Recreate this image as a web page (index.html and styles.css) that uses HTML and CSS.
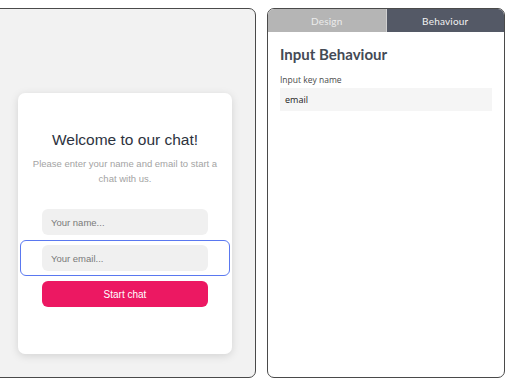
FILE: index.html
```html
<!DOCTYPE html>
<html lang="en">
<head>
    <meta charset="UTF-8">
    <meta name="viewport" content="width=device-width, initial-scale=1.0">
    <title>Chat Form Editor</title>
    <link rel="stylesheet" href="styles.css">
</head>
<body>
    <div class="preview">
        <div class="card">
            <h1>Welcome to our chat!</h1>
            <p class="intro">Please enter your name and email to start a chat with us.</p>
            <div class="form">
                <div class="field">
                    <input type="text" class="input" placeholder="Your name...">
                </div>
                <div class="field selected">
                    <input type="email" class="input" placeholder="Your email...">
                </div>
                <div class="field">
                    <button class="start">Start chat</button>
                </div>
            </div>
        </div>
    </div>

    <div class="settings">
        <div class="tabs">
            <div class="tab">Design</div>
            <div class="tab active">Behaviour</div>
        </div>
        <div class="settings-body">
            <h2>Input Behaviour</h2>
            <label class="label">Input key name</label>
            <div class="value">email</div>
        </div>
    </div>
</body>
</html>
```

FILE: styles.css
```css
* {
    margin: 0;
    padding: 0;
    box-sizing: border-box;
}

body {
    background: #fff;
    height: 382px;
    overflow: hidden;
    display: flex;
    gap: 11px;
    padding: 8px 5px 4px 0;
}

.preview {
    margin-left: -10px;
    width: 266px;
    height: 370px;
    background: #f2f2f2;
    border: 1px solid #4a4a4a;
    border-radius: 7px;
    padding: 84px 0 0 27px;
}

.card {
    width: 214px;
    height: 261px;
    background: #fff;
    border-radius: 7px;
    box-shadow: 0 2px 8px rgba(0, 0, 0, 0.13);
    padding: 37px 2px 0;
    text-align: center;
    font-family: "Liberation Sans", Arial, sans-serif;
}

.card h1 {
    font-size: 15.5px;
    font-weight: 400;
    line-height: 20px;
    color: #2d3340;
}

.intro {
    max-width: 192px;
    font-size: 9.5px;
    line-height: 15px;
    color: #a3a3a3;
    margin: 6px auto 0;
}

.form {
    margin-top: 23px;
    display: flex;
    flex-direction: column;
    gap: 5px;
}

.field {
    padding: 0 22px;
}

.selected {
    border: 1px solid #5a78f0;
    border-radius: 6px;
    padding: 4px 21px;
}

.input {
    display: block;
    width: 100%;
    height: 26px;
    border: none;
    border-radius: 6px;
    background: #f0f0f0;
    padding: 0 9px;
    font-family: "Liberation Sans", Arial, sans-serif;
    font-size: 9.5px;
    color: #333;
    outline: none;
}

.input::placeholder {
    color: #7a7a7a;
}

.start {
    display: block;
    width: 100%;
    height: 26px;
    border: none;
    border-radius: 6px;
    background: #ec1862;
    color: #fff;
    font-family: "Liberation Sans", Arial, sans-serif;
    font-size: 10px;
}

.settings {
    width: 238px;
    height: 370px;
    border: 1px solid #4a4a4a;
    border-radius: 7px;
    overflow: hidden;
    background: #fff;
}

.tabs {
    display: flex;
    height: 23px;
}

.tab {
    flex: 1;
    display: flex;
    align-items: center;
    justify-content: center;
    background: #b5b5b5;
    color: #ececec;
    font-family: Lato, sans-serif;
    font-size: 10px;
    letter-spacing: 0.2px;
}

.tab.active {
    background: #545966;
    border-left: 1px solid #cfcfcf;
    color: #f2f2f2;
}

.settings-body {
    padding: 12px 12px 0;
}

.settings-body h2 {
    font-family: Lato, sans-serif;
    font-size: 15px;
    font-weight: 700;
    color: #444a55;
    line-height: 20px;
}

.label {
    display: block;
    margin-top: 10px;
    font-family: "Open Sans", sans-serif;
    font-size: 8.5px;
    color: #4a4a4a;
    line-height: 12px;
}

.value {
    margin-top: 2px;
    height: 23px;
    background: #f5f5f5;
    padding: 0 5px;
    display: flex;
    align-items: center;
    font-family: "Open Sans", sans-serif;
    font-size: 9px;
    color: #222;
}
```
